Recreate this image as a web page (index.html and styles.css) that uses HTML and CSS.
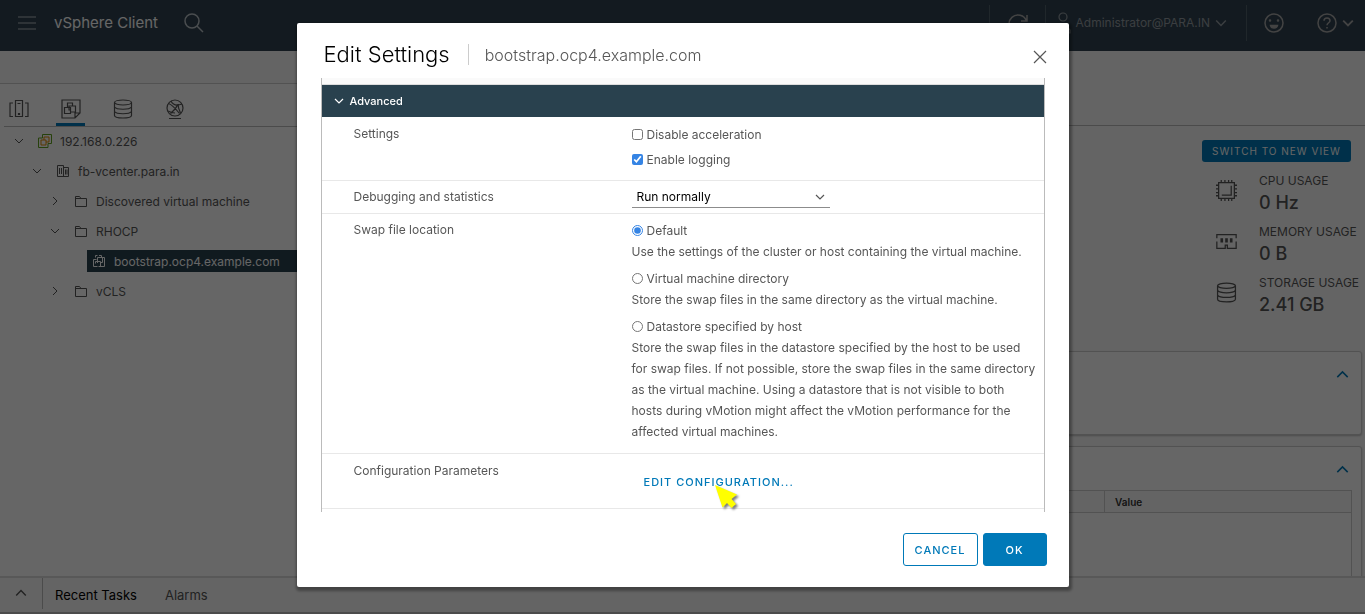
FILE: index.html
```html
<!DOCTYPE html>
<html lang="en">
<head>
<meta charset="utf-8">
<meta name="viewport" content="width=device-width, initial-scale=1">
<title>vSphere Client</title>
<link rel="stylesheet" href="styles.css">
</head>
<body>
<svg class="sprite" aria-hidden="true">
  <symbol id="chevron-down" viewBox="0 0 10 10"><path d="M1 3l4 4 4-4"/></symbol>
  <symbol id="chevron-up" viewBox="0 0 10 10"><path d="M1 7l4-4 4 4"/></symbol>
  <symbol id="chevron-right" viewBox="0 0 10 10"><path d="M3 1l4 4-4 4"/></symbol>
  <symbol id="folder" viewBox="0 0 14 14"><path d="M1.500 12.500v-10h4l1.500 2h5.500v8zM1.500 4.500H7"/></symbol>
  <symbol id="storage" viewBox="0 0 20 20"><ellipse cx="10" cy="3.500" rx="8.500" ry="2.500"/><path d="M1.500 3.500v13c0 3.300 17 3.300 17 0v-13M1.500 8c2 3 15 3 17 0M1.500 12.500c2 3 15 3 17 0"/></symbol>
  <symbol id="vm" viewBox="0 0 14 14"><path d="M3.500 3.500v-2h2M7 1.500h2.500v2M1.500 12.500v-7h3M1.500 12.500h4M5.500 6V3.500h7v9h-5M5.500 9V6M3.500 7.500h5v5h-2M10.500 3.500v5h-2M3.500 7.500v2"/></symbol>
</svg>

<div class="app">
  <header class="topbar">
    <button class="icon-btn menu" aria-label="Menu"><svg viewBox="0 0 18 16"><path d="M0 2h18M0 8h18M0 14h18"/></svg></button>
    <span class="brand">vSphere Client</span>
    <button class="icon-btn search" aria-label="Search"><svg viewBox="0 0 20 20"><circle cx="8" cy="8" r="7"/><path d="M13 13l6 6"/></svg></button>
    <div class="topbar-right">
      <button class="icon-btn refresh" aria-label="Refresh"><svg viewBox="0 0 20 20"><path d="M18.500 8A9 9 0 1 0 19 11M19 2v6h-6"/></svg></button>
      <button class="user"><svg class="user-icon" viewBox="0 0 20 22"><circle cx="7" cy="5" r="4"/><path d="M1 21v-3c2-5 10-5 13 0v3z"/></svg>Administrator@PARA.IN<svg class="chev"><use href="#chevron-down"/></svg></button>
      <button class="icon-btn feedback" aria-label="Feedback"><svg viewBox="0 0 20 20"><circle cx="10" cy="10" r="9"/><path class="solid" d="M6.500 12.500h7c-.5 3.300-6.500 3.300-7 0z"/><circle class="solid" cx="6" cy="7.500" r=".5"/><circle class="solid" cx="14" cy="7.500" r=".5"/></svg></button>
      <button class="icon-btn help" aria-label="Help"><svg viewBox="0 0 20 20"><circle cx="10" cy="10" r="9"/><path d="M7 7.800C7 4 13 4 13 7.800c0 2-3 2-3 4.500M10 14v1.500"/></svg><svg class="chev"><use href="#chevron-down"/></svg></button>
    </div>
  </header>

  <div class="workspace">
    <nav class="sidebar">
      <div class="sidebar-strip"></div>
      <div class="inventory-tabs">
        <button class="tab" aria-label="Hosts and clusters"><svg viewBox="0 0 20 20"><path d="M6.500 1.500h7v16h-7zM8.500 4.500h3M4 4H1v13.500h3M16 4h3v13.500h-3M9.500 14.500h1v1h-1z"/></svg></button>
        <button class="tab active" aria-label="VMs and templates"><svg viewBox="0 0 20 20"><path d="M1 1h18v13l-5 5H1zM14 19v-5h5M3.500 8.500h6v6h-6zM6.500 8V4h5v3M9.500 13H14.500V7H8v4h2"/></svg></button>
        <button class="tab" aria-label="Storage"><svg><use href="#storage"/></svg></button>
        <button class="tab" aria-label="Networking"><svg viewBox="0 0 20 20"><circle cx="10" cy="9" r="8"/><path d="M4 19.500h12M3.500 4.500c3 1 7 5 11 10M6 2c2 4 6 5 11 3M3 12c2 1 4 2 7 2M12.500 5.500c-1 4-4 6-7 9M13 5c0 4 1 6 2.500 9"/></svg></button>
      </div>
      <ul class="tree">
        <li>
          <div class="node"><svg class="chev"><use href="#chevron-down"/></svg><svg class="node-icon" viewBox="0 0 14 14"><path class="green" d="M4.500 4V.5h9v9H10v4H.5V4z"/><path class="orange" d="M3 6h5v5H3zM6 6V3h5v5H8"/></svg><a href="#">192.168.0.226</a></div>
          <ul>
            <li>
              <div class="node"><svg class="chev"><use href="#chevron-down"/></svg><svg class="node-icon" viewBox="0 0 14 14"><path d="M1.500 12.500v-11h6v11M7.500 3.500h5v9h-11M3.500 4v6M5.500 4v6M9.500 5.500v5M11 5.500v5"/></svg><a href="#">fb-vcenter.para.in</a></div>
              <ul>
                <li><div class="node"><svg class="chev"><use href="#chevron-right"/></svg><svg class="node-icon"><use href="#folder"/></svg><a href="#">Discovered virtual machine</a></div></li>
                <li>
                  <div class="node"><svg class="chev"><use href="#chevron-down"/></svg><svg class="node-icon"><use href="#folder"/></svg><a href="#">RHOCP</a></div>
                  <ul>
                    <li><div class="node selected"><svg class="node-icon"><use href="#vm"/></svg><a href="#">bootstrap.ocp4.example.com</a></div></li>
                  </ul>
                </li>
                <li><div class="node"><svg class="chev"><use href="#chevron-right"/></svg><svg class="node-icon"><use href="#folder"/></svg><a href="#">vCLS</a></div></li>
              </ul>
            </li>
          </ul>
        </li>
      </ul>
    </nav>

    <main class="content">
      <div class="content-head"></div>
      <section class="usage">
        <button class="switch-view">SWITCH TO NEW VIEW</button>
        <div class="usage-item"><svg viewBox="0 0 20 20"><path d="M2.500 2.500h15v15h-15zM14.500 5.500v9h-9M5 0v2M8.500 0v2M12 0v2M15 0v2M5 18v2M8.500 18v2M12 18v2M15 18v2M0 5h2M0 8.500h2M0 12h2M0 15h2M18 5h2M18 8.500h2M18 12h2M18 15h2"/></svg><div><div class="usage-label">CPU USAGE</div><div class="usage-value">0 Hz</div></div></div>
        <div class="usage-item"><svg viewBox="0 0 20 20"><path d="M.8 7V3.500h18.400V7M.8 10v6.500h8v-3h2v3h8.400V10"/><path class="bars" d="M5.500 7v4M10 7v4M14.500 7v4"/></svg><div><div class="usage-label">MEMORY USAGE</div><div class="usage-value">0 B</div></div></div>
        <div class="usage-item"><svg><use href="#storage"/></svg><div><div class="usage-label">STORAGE USAGE</div><div class="usage-value">2.41 GB</div></div></div>
      </section>
      <section class="card card-short"><button class="collapse" aria-label="Collapse"><svg><use href="#chevron-up"/></svg></button></section>
      <section class="card card-tall">
        <button class="collapse" aria-label="Collapse"><svg><use href="#chevron-up"/></svg></button>
        <table class="attributes"><thead><tr><th class="attr-name"></th><th>Value</th></tr></thead><tbody><tr><td></td><td></td></tr></tbody></table>
      </section>
    </main>
  </div>

  <footer class="taskbar">
    <button class="task-toggle" aria-label="Expand tasks"><svg><use href="#chevron-up"/></svg></button>
    <button class="task-tab current">Recent Tasks</button>
    <button class="task-tab">Alarms</button>
  </footer>
</div>

<div class="overlay">
  <div class="modal" role="dialog" aria-modal="true" aria-labelledby="modal-title">
    <div class="modal-head">
      <h1 id="modal-title">Edit Settings</h1>
      <span class="modal-sub">bootstrap.ocp4.example.com</span>
      <button class="close" aria-label="Close"><svg viewBox="0 0 14 14"><path d="M1 1l12 12M13 1L1 13"/></svg></button>
    </div>
    <div class="modal-body">
      <div class="section-tail"></div>
      <button class="section-title"><svg><use href="#chevron-down"/></svg>Advanced</button>
      <div class="row row-settings">
        <div class="label">Settings</div>
        <div class="field checks">
          <label class="choice"><input type="checkbox">Disable acceleration</label>
          <label class="choice"><input type="checkbox" checked>Enable logging</label>
        </div>
      </div>
      <div class="row">
        <label class="label" for="debugging">Debugging and statistics</label>
        <div class="field"><div class="select"><select id="debugging"><option>Run normally</option></select><svg><use href="#chevron-down"/></svg></div></div>
      </div>
      <div class="row row-swap">
        <div class="label">Swap file location</div>
        <div class="field swap">
          <div><label class="choice"><input type="radio" name="swap" checked>Default</label><p>Use the settings of the cluster or host containing the virtual machine.</p></div>
          <div><label class="choice"><input type="radio" name="swap">Virtual machine directory</label><p>Store the swap files in the same directory as the virtual machine.</p></div>
          <div><label class="choice"><input type="radio" name="swap">Datastore specified by host</label><p>Store the swap files in the datastore specified by the host to be used<br>for swap files. If not possible, store the swap files in the same directory<br>as the virtual machine. Using a datastore that is not visible to both<br>hosts during vMotion might affect the vMotion performance for the<br>affected virtual machines.</p></div>
        </div>
      </div>
      <div class="row row-config">
        <div class="label">Configuration Parameters</div>
        <div class="field config">
          <button class="link-btn">EDIT CONFIGURATION...</button>
          <svg class="pointer" viewBox="0 0 24 24"><path d="M0 0l22 9.500-5.500 4.500 4.500 5-4.500 4-4.500-5-4.500 4.500z"/></svg>
        </div>
      </div>
    </div>
    <div class="modal-foot">
      <button class="btn outline">CANCEL</button>
      <button class="btn primary">OK</button>
    </div>
  </div>
</div>
</body>
</html>
```
FILE: styles.css
```css
* { box-sizing: border-box; }
body {
  margin: 0;
  overflow: hidden;
  color: #565656;
  background: #fff;
  font-family: Metropolis, Inter, "Open Sans", sans-serif;
  font-size: 12px;
}
button, select { font: inherit; color: inherit; background: none; border: 0; padding: 0; }
svg { flex: none; width: 10px; height: 10px; fill: none; stroke: currentColor; stroke-width: 1.2; }
.sprite { position: absolute; width: 0; height: 0; }
ul { list-style: none; margin: 0; padding: 0; }
a { color: inherit; text-decoration: none; }

.app { display: flex; flex-direction: column; height: 100vh; }

.topbar { display: flex; align-items: center; flex: none; height: 51px; padding: 0 11px 6px 18px; background: #314351; color: #a8a8a8; }
.icon-btn { display: flex; align-items: center; }
.icon-btn svg { width: 20px; height: 20px; stroke-width: 1.5; }
.menu svg { width: 18px; height: 16px; color: #8a949c; }
.brand { margin: 0 26px 0 18px; font-size: 15px; color: #fff; }
.search { color: #b8c0c6; }
.topbar-right { display: flex; align-items: center; margin-left: auto; height: 36px; }
.topbar-right .chev { width: 12px; height: 12px; margin-left: 5px; }
.refresh, .user, .feedback { height: 36px; }
.refresh { padding: 0 17px 0 18px; border: solid #51616d; border-width: 0 1px; }
.user { display: flex; align-items: center; padding: 0 19px 0 10px; border-right: 1px solid #51616d; color: #949ca2; }
.user-icon { width: 20px; height: 22px; }
.feedback { padding: 0 33px 0 17px; }
.icon-btn .solid { fill: currentColor; }

.workspace { display: flex; flex: 1; min-height: 0; }
.sidebar { flex: 0 0 22%; }
.sidebar-strip { height: 33px; border-bottom: 1px solid #ccc; background: #fafafa; }
.inventory-tabs { display: flex; gap: 23px; height: 43px; margin-left: 4px; border-bottom: 1px solid #bbb; }
.tab { display: grid; place-items: center; width: 29px; height: 42px; padding-top: 8px; }
.tab.active { border-bottom: 3px solid #0079b8; padding-top: 11px; }
.tab svg { width: 20px; height: 20px; }
.tree { padding-top: 3px; }
.tree ul { padding-left: 18px; }
.node { display: flex; align-items: center; height: 22px; margin-bottom: 8px; padding-left: 14px; }
.node .chev { margin-right: 14px; stroke-width: 1; }
.node-icon { width: 14px; height: 14px; margin-right: 8px; stroke-width: 1; }
.node.selected { margin-left: 33px; margin-right: -20px; padding-left: 5px; background: #29414e; color: #fff; }
.green { stroke: #62a420; }
.orange { stroke: #e08a00; }

.content { display: flex; flex-direction: column; flex: 1; min-width: 0; overflow: hidden; background: #fafafa; }
.content-head { flex: none; height: 75px; border-bottom: 1px solid #bbb; }
.usage { display: flex; flex-direction: column; align-self: flex-end; gap: 3px; width: 163px; flex: none; height: 225px; padding-top: 14px; }
.switch-view { height: 22px; width: 149px; margin-bottom: 4px; background: #0079b8; color: #fff; border-radius: 3px; font-size: 10px; letter-spacing: 1px; white-space: nowrap; }
.usage-item { display: flex; align-items: center; gap: 22px; height: 48px; padding-left: 14px; }
.usage-item svg { width: 21px; height: 21px; margin-bottom: 6px; }
.usage-item .bars { stroke-width: 2.500; }
.usage-label { line-height: 20px; white-space: nowrap; }
.usage-value { font-size: 18px; line-height: 24px; font-weight: 500; }
.card { flex: none; margin: 0 3px 11px 12px; padding: 0 9px; border: 1px solid #ccc; border-radius: 3px; background: #fff; box-shadow: 0 1px 2px #bbb; }
.card-short { height: 84px; }
.card-tall { height: 180px; }
.collapse { display: block; height: 43px; margin-left: auto; padding: 5px 3px 0; color: #0079b8; }
.collapse svg { width: 13px; height: 13px; }
.attributes { width: 100%; height: 137px; table-layout: fixed; border-collapse: collapse; border: 1px solid #ccc; }
.attributes th { height: 22px; padding: 0 10px; text-align: left; font-weight: 600; font-size: 10px; border: 1px solid #ccc; color: #333; background: #fafafa; }
.attributes .attr-name { width: 76%; }

.taskbar { display: flex; flex: none; height: 38px; padding-bottom: 3px; background: #fafafa; border-top: 2px solid #ddd; border-bottom: 2px solid #bbb; font-size: 13px; }
.task-toggle { width: 43px; border-right: 1px solid #bbb; }
.task-toggle svg { width: 12px; height: 12px; }
.task-tab { padding: 3px 16px 0 12px; }
.task-tab.current { color: #000; }

.overlay { position: fixed; inset: 0; display: flex; justify-content: center; padding: 23px 20px 27px; background: rgba(0, 0, 0, .6); }
.modal { display: flex; flex-direction: column; width: 100%; max-width: 772px; padding: 0 24px 21px; background: #fff; border-radius: 2px; box-shadow: 1px 2px 3px 2px rgba(0, 0, 0, .35); }
.modal-head { display: flex; align-items: center; flex: none; height: 55px; margin-right: -6px; padding: 8px 0 0 3px; }
.modal-head h1 { margin: 0; padding-right: 18px; font-size: 22px; line-height: 21px; font-weight: 300; color: #000; border-right: 1px solid #ccc; }
.modal-sub { padding-left: 16px; font-size: 16px; font-weight: 300; }
.close { display: flex; margin-left: auto; padding: 4px 4px 0; }
.close svg { width: 14px; height: 14px; }
.modal-body { flex: 1; min-height: 0; overflow: hidden; border: solid #bbb; border-width: 0 1px; }
.section-tail { height: 7px; background: #fafafa; border-bottom: 1px solid #ddd; }
.section-title { display: flex; align-items: center; gap: 6px; width: 100%; height: 32px; padding-left: 12px; background: #29414e; color: #fff; font-size: 11px; font-weight: 500; }
.row { display: grid; grid-template-columns: 278px 1fr; padding: 5px 4px 5px 32px; border-bottom: 1px solid #e8e8e8; }
.row-settings { padding-top: 6px; padding-bottom: 10px; }
.row-swap { padding-bottom: 11px; }
.row-config { padding-top: 6px; padding-bottom: 8px; }
.label { line-height: 22px; }
.checks { display: grid; gap: 3px; }
.choice { display: flex; align-items: center; height: 22px; gap: 4px; }
.choice input { width: 11px; height: 11px; margin: 0; accent-color: #3584e4; }
.select { display: flex; align-items: center; width: 198px; height: 22px; border-bottom: 1px solid #8c8c8c; }
.select select { flex: 1; height: 21px; padding-left: 5px; margin-right: -15px; padding-right: 15px; appearance: none; color: #000; }
.select svg { margin-right: 5px; pointer-events: none; }
.swap { display: grid; gap: 5px; }
.swap p { margin: 0; line-height: 21px; }
.config { position: relative; padding-top: 4px; }
.link-btn { height: 36px; padding: 0 12px; color: #0079b8; font-size: 11px; font-weight: 500; letter-spacing: 1px; }
.pointer { position: absolute; left: 83px; top: 25px; width: 24px; height: 24px; fill: #ff0; stroke: none; filter: drop-shadow(2px 2px 1px rgba(0, 0, 0, .5)); }
.modal-foot { display: flex; justify-content: flex-end; flex: none; gap: 5px; padding: 21px 0 0; margin-right: -2px; }
.btn { height: 33px; min-width: 64px; padding: 0 11px; border: 1px solid #0079b8; border-radius: 3px; font-size: 11px; font-weight: 500; letter-spacing: 1px; }
.outline { color: #0079b8; min-width: 75px; }
.primary { background: #0079b8; color: #fff; }
```
